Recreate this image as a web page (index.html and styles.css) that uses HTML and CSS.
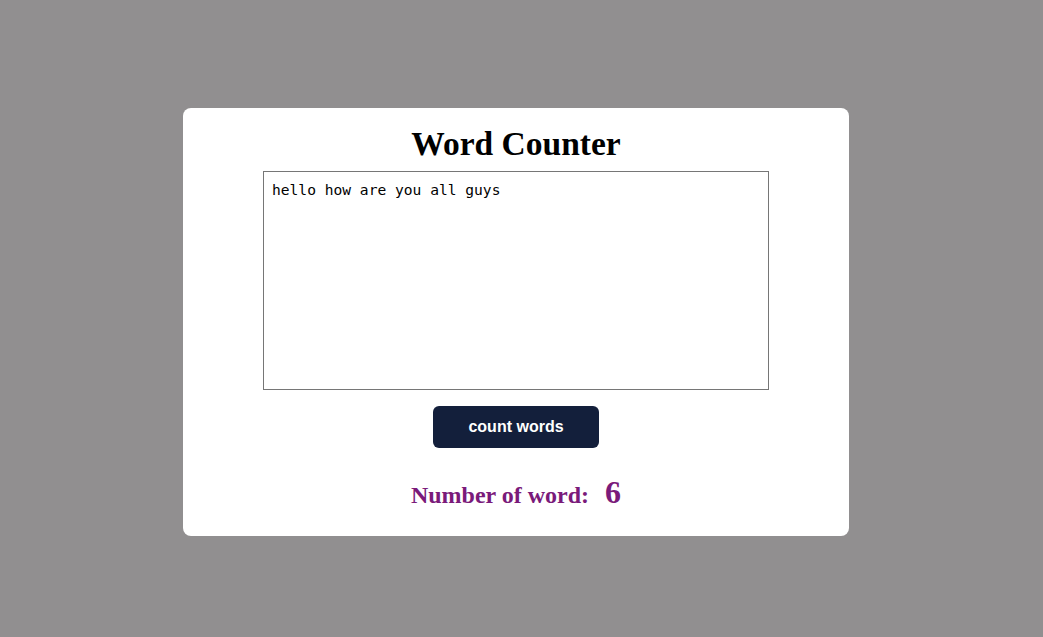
FILE: index.html
```html
<!DOCTYPE html>
<html>
<head>
<meta charset="utf-8">
<link rel="stylesheet" href="styles.css">
</head>
<body>
<div class="card">
  <h1 class="title">Word Counter</h1>
  <textarea class="input">hello how are you all guys</textarea>
  <button class="btn">count words</button>
  <div class="result"><span class="label">Number of word:</span><span class="count">6</span></div>
</div>
</body>
</html>
```
FILE: styles.css
```css
html, body {
  margin: 0;
  padding: 0;
}
body {
  background: #918f90;
  height: 637px;
  display: flex;
  justify-content: center;
  align-items: flex-start;
  font-family: "Liberation Serif", "Times New Roman", serif;
}
.card {
  margin-top: 108px;
  margin-right: 11px;
  width: 666px;
  height: 428px;
  box-sizing: border-box;
  background: #fff;
  border-radius: 8px;
  display: flex;
  flex-direction: column;
  align-items: center;
  padding-top: 17px;
}
.title {
  margin: 0;
  font-size: 33.5px;
  font-weight: bold;
  line-height: 37px;
  color: #000;
}
.input {
  margin-top: 9px;
  width: 506px;
  height: 219px;
  box-sizing: border-box;
  border: 1px solid #767676;
  padding: 9px 8px 8px;
  font-family: "DejaVu Sans Mono", "Liberation Mono", monospace;
  font-size: 14.6px;
  line-height: 18px;
  color: #000;
  resize: none;
  outline: none;
}
.btn {
  margin-top: 16px;
  width: 166px;
  height: 42px;
  background: #131f3b;
  color: #fff;
  border: none;
  border-radius: 6px;
  font-family: "Liberation Sans", Arial, sans-serif;
  font-size: 16px;
  font-weight: bold;
}
.result {
  margin-top: 26px;
  display: flex;
  align-items: baseline;
  color: #7a1a7a;
  font-weight: bold;
}
.label {
  font-size: 24px;
}
.count {
  font-size: 32px;
  margin-left: 16px;
}
```
